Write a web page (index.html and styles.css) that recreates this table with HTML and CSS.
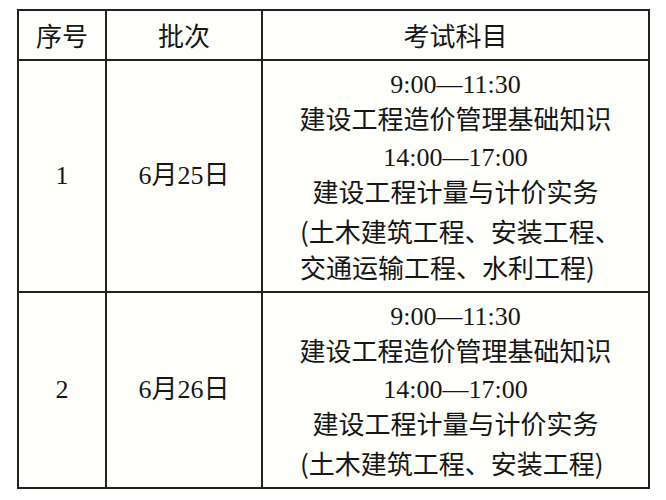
FILE: index.html
```html
<!DOCTYPE html>
<html lang="zh-CN">
<head>
<meta charset="utf-8">
<title>考试安排</title>
<link rel="stylesheet" href="styles.css">
</head>
<body>
<table class="schedule">
  <thead>
    <tr class="head-row">
      <th class="col-no">序号</th>
      <th class="col-batch">批次</th>
      <th class="col-subject">考试科目</th>
    </tr>
  </thead>
  <tbody>
    <tr class="row-one">
      <td class="col-no">1</td>
      <td class="col-batch">6月25日</td>
      <td class="col-subject">
        <div class="line">9:00—11:30</div>
        <div class="line">建设工程造价管理基础知识</div>
        <div class="line">14:00—17:00</div>
        <div class="line">建设工程计量与计价实务</div>
        <div class="line note">(土木建筑工程、安装工程、</div>
        <div class="line note">交通运输工程、水利工程)</div>
      </td>
    </tr>
    <tr class="row-two">
      <td class="col-no">2</td>
      <td class="col-batch">6月26日</td>
      <td class="col-subject">
        <div class="line">9:00—11:30</div>
        <div class="line">建设工程造价管理基础知识</div>
        <div class="line">14:00—17:00</div>
        <div class="line">建设工程计量与计价实务</div>
        <div class="line note">(土木建筑工程、安装工程)</div>
      </td>
    </tr>
  </tbody>
</table>
</body>
</html>
```
FILE: styles.css
```css
html, body {
  margin: 0;
  padding: 0;
  background: #ffffff;
}
body {
  padding: 9px 0 0 17px;
  font-family: "Liberation Serif", "Noto Sans CJK SC", serif;
  color: #161616;
}
.schedule {
  border-collapse: separate;
  border-spacing: 0;
  table-layout: fixed;
  width: 631px;
  border-top: 2px solid #222;
  border-left: 2px solid #222;
  background: #fefefa;
}
.schedule th,
.schedule td {
  box-sizing: border-box;
  border-right: 2px solid #222;
  border-bottom: 2px solid #222;
  padding: 0;
  text-align: center;
  vertical-align: middle;
  font-size: 26px;
  font-weight: normal;
  line-height: 36.5px;
}
.schedule th {
  font-family: "Noto Sans CJK SC", sans-serif;
}
.col-no { width: 88px; }
.col-batch { width: 156px; }
.col-subject { width: 387px; }
.head-row th { height: 50px; }
.row-one td { height: 232px; }
.row-two td { height: 196px; }
.line {
  white-space: nowrap;
}
.note {
  font-family: "Noto Sans CJK SC", sans-serif;
  text-align: left;
  padding-left: 37px;
}
```
